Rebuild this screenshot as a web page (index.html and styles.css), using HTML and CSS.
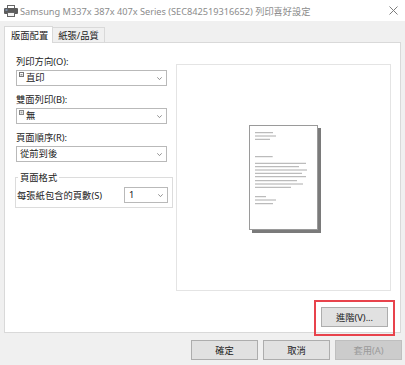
FILE: index.html
```html
<!DOCTYPE html>
<html>
<head>
<meta charset="utf-8">
<link rel="stylesheet" href="styles.css">
</head>
<body>
<div class="titlebar">
  <svg class="printer" width="14" height="12" viewBox="0 0 14 12">
    <rect x="3.5" y="0.5" width="7" height="3" fill="#fff" stroke="#666"/>
    <rect x="0" y="3" width="14" height="6" rx="1" fill="#5c5c5c"/>
    <rect x="1.5" y="4.5" width="2" height="1" fill="#9be"/>
    <rect x="3.5" y="7.5" width="7" height="4" fill="#f4f4f4" stroke="#666"/>
  </svg>
  <span class="title">Samsung M337x 387x 407x Series (SEC842519316652) 列印喜好設定</span>
  <svg class="close" width="9" height="9" viewBox="0 0 9 9">
    <path d="M0.5 0.5L8.5 8.5M8.5 0.5L0.5 8.5" stroke="#7d7d7d" stroke-width="1" fill="none"/>
  </svg>
</div>
<div class="tabs">
  <div class="tab active">版面配置</div>
  <div class="tab">紙張/品質</div>
</div>
<div class="panel">
  <div class="left">
    <div class="label">列印方向(O):</div>
    <div class="combo">
      <svg class="opt-icon" width="5" height="5" viewBox="0 0 5 5"><rect x="0.5" y="0.5" width="4" height="4" fill="#fff" stroke="#777"/><rect x="1.5" y="2" width="2" height="1.5" fill="#999"/></svg>
      <span class="val">直印</span>
      <svg class="chev" width="5" height="3" viewBox="0 0 5 3"><path d="M0.3 0.3L2.5 2.6L4.7 0.3" stroke="#777" stroke-width="0.8" fill="none"/></svg>
    </div>
    <div class="label">雙面列印(B):</div>
    <div class="combo">
      <svg class="opt-icon" width="5" height="5" viewBox="0 0 5 5"><rect x="0.5" y="0.5" width="4" height="4" fill="#fff" stroke="#888"/><rect x="1.5" y="1.5" width="2" height="2" fill="#aaa"/></svg>
      <span class="val">無</span>
      <svg class="chev" width="5" height="3" viewBox="0 0 5 3"><path d="M0.3 0.3L2.5 2.6L4.7 0.3" stroke="#777" stroke-width="0.8" fill="none"/></svg>
    </div>
    <div class="label">頁面順序(R):</div>
    <div class="combo">
      <span class="val plain">從前到後</span>
      <svg class="chev" width="5" height="3" viewBox="0 0 5 3"><path d="M0.3 0.3L2.5 2.6L4.7 0.3" stroke="#777" stroke-width="0.8" fill="none"/></svg>
    </div>
    <fieldset class="group">
      <legend>頁面格式</legend>
      <div class="group-row">
        <span>每張紙包含的頁數(S)</span>
        <div class="combo small">
          <span class="val plain">1</span>
          <svg class="chev" width="5" height="3" viewBox="0 0 5 3"><path d="M0.3 0.3L2.5 2.6L4.7 0.3" stroke="#777" stroke-width="0.8" fill="none"/></svg>
        </div>
      </div>
    </fieldset>
  </div>
  <div class="right">
    <div class="preview">
      <svg class="page" width="72" height="108" viewBox="0 0 72 108">
        <rect x="3" y="3" width="69" height="105" fill="#7a7a7a"/>
        <rect x="0.5" y="0.5" width="68" height="104" fill="#fff" stroke="#9a9a9a"/>
        <g stroke="#a3a3a3" stroke-width="0.9">
          <path d="M6 7.7h18M6 11h21M6 14.3h15"/>
          <path d="M6 31.7h17.7"/>
          <path d="M6 38.3h51M6 41.7h44M6 45h52M6 48.3h47M6 51.7h51M6 55.7h42M6 59h48M6 62.3h36"/>
          <path d="M6 71.7h11M6 75h21M6 78.7h18"/>
        </g>
      </svg>
    </div>
    <div class="adv-row">
      <div class="adv-wrap">
        <button class="btn">進階(V)...</button>
        <span class="highlight"></span>
      </div>
    </div>
  </div>
</div>
<div class="footer">
  <button class="btn">確定</button>
  <button class="btn">取消</button>
  <button class="btn disabled">套用(A)</button>
</div>
</body>
</html>
```
FILE: styles.css
```css
* { box-sizing: border-box; }

body {
  margin: 0;
  width: 405px;
  height: 365px;
  overflow: hidden;
  background: #f0f0f0;
  font-family: "Noto Sans", "Noto Sans CJK TC", sans-serif;
  font-size: 9.3px;
  color: #222;
}

.titlebar {
  height: 21px;
  background: #fff;
  display: flex;
  align-items: center;
  padding-left: 4px;
}

.printer { margin-right: 2px; }

.title {
  flex: 1;
  color: #8c8c8c;
  white-space: nowrap;
  font-size: 9.2px;
}

.close { margin-right: 7px; }

.tabs {
  height: 21px;
  display: flex;
  align-items: flex-end;
  padding-left: 4px;
}

.tab {
  height: 15px;
  padding: 0 5px;
  display: flex;
  align-items: center;
  background: #f0f0f0;
  border: 1px solid #d9d9d9;
  border-left: none;
  border-bottom: none;
}

.tab.active {
  height: 17px;
  background: #fff;
  border-left: 1px solid #d9d9d9;
  margin-bottom: -1px;
  padding: 0 4px 0 6px;
  position: relative;
}

.panel {
  width: 397px;
  height: 291px;
  margin-left: 4px;
  background: #fff;
  border: 1px solid #d9d9d9;
  display: flex;
  padding: 12px 0 0 11px;
}

.left {
  width: 157px;
  display: flex;
  flex-direction: column;
}

.label {
  height: 13px;
  line-height: 13px;
}

.combo {
  margin-top: 2px;
  margin-bottom: 7px;
  width: 151px;
  height: 16px;
  border: 1px solid #b9b9b9;
  background: #fff;
  display: flex;
  align-items: center;
  padding: 0 4px 0 2px;
}

.opt-icon {
  align-self: flex-start;
  margin-top: 1px;
  margin-right: 2px;
}

.val { flex: 1; line-height: 14px; }
.val.plain { padding-left: 1px; }

.chev { flex: none; }

.group {
  margin: 2px 0 0 -1px;
  width: 158px;
  border: 1px solid #dcdcdc;
  padding: 0 4px 4px 1px;
}

.group legend {
  margin-left: 1px;
  padding: 0 2px;
  line-height: 13px;
}

.group-row {
  margin-top: 3px;
  display: flex;
  align-items: center;
}

.group-row > span { flex: 1; }

.combo.small {
  width: 44px;
  margin: 0;
  padding-left: 3px;
}

.right {
  margin-left: 3px;
  width: 215px;
  display: flex;
  flex-direction: column;
}

.preview {
  margin-top: 9px;
  width: 215px;
  height: 227px;
  border: 1px solid #e4e4e4;
  display: flex;
  align-items: center;
  justify-content: center;
}

.page { display: block; margin: 2px 0 0 2px; }

.adv-row {
  margin-top: 16px;
  display: flex;
  justify-content: flex-end;
  padding-right: 3px;
}

.adv-wrap { position: relative; }

.highlight {
  position: absolute;
  left: -7px;
  right: -7px;
  top: -7px;
  bottom: -9px;
  border: 2px solid #e8434c;
  pointer-events: none;
}

.btn {
  width: 67px;
  height: 20px;
  padding: 0;
  background: #e1e1e1;
  border: 1px solid #adadad;
  border-radius: 0;
  font-family: inherit;
  font-size: 9.3px;
  color: #222;
  display: block;
}

.btn.disabled {
  background: #cccccc;
  border-color: #bfbfbf;
  color: #9a9a9a;
}

.footer {
  display: flex;
  justify-content: flex-end;
  gap: 5px;
  padding: 7px 3px 0 0;
}
```
